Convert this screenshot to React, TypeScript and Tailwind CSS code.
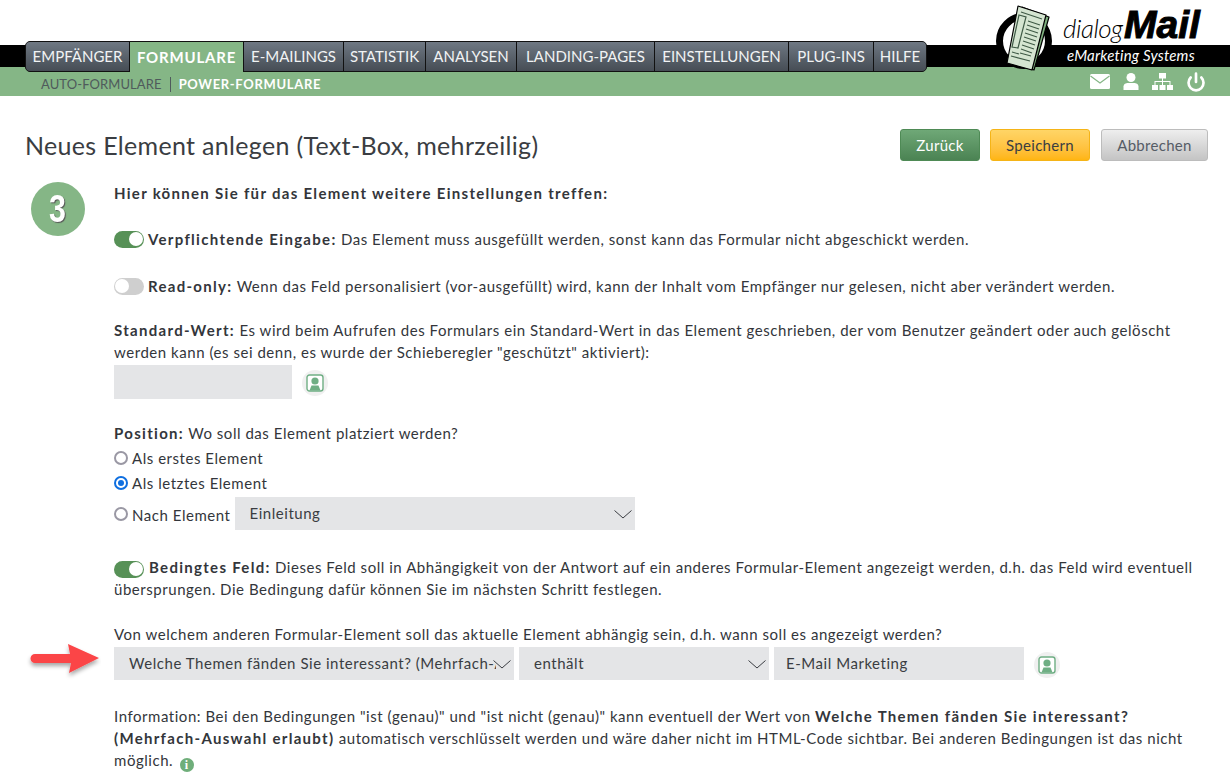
import { Power } from "lucide-react";
import type { ReactNode } from "react";

const tabs = [
  { label: "EMPFÄNGER", width: "w-[103px] rounded-l-[4px]" },
  { label: "FORMULARE", width: "w-[113px]", active: true },
  { label: "E-MAILINGS", width: "w-[99px]" },
  { label: "STATISTIK", width: "w-[81px]" },
  { label: "ANALYSEN", width: "w-[90px]" },
  { label: "LANDING-PAGES", width: "w-[137px]" },
  { label: "EINSTELLUNGEN", width: "w-[133px]" },
  { label: "PLUG-INS", width: "w-[84px]" },
  { label: "HILFE", width: "w-[52px] rounded-r-[4px]" },
];

const B = ({ children }: { children: ReactNode }) => (
  <b className="font-bold tracking-[1.3px]">{children}</b>
);

const Toggle = ({ on }: { on?: boolean }) => (
  <span
    className={`inline-flex w-[30px] h-[17px] rounded-full items-center shrink-0 ${
      on ? "bg-[#579157] justify-end pr-[1px]" : "bg-[#cfcfcf] justify-start pl-[1px]"
    }`}
  >
    <span className="w-[14px] h-[14px] rounded-full bg-white" />
  </span>
);

const Radio = ({ on }: { on?: boolean }) => (
  <span
    className={`w-[14px] h-[14px] rounded-full border-2 bg-white flex items-center justify-center shrink-0 ${
      on ? "border-[#0f6fe0]" : "border-[#9a98a4]"
    }`}
  >
    {on && <span className="w-[6px] h-[6px] rounded-full bg-[#0f6fe0]" />}
  </span>
);

const Select = ({ value, width }: { value: string; width: string }) => (
  <div className={`${width} h-[33px] bg-[#e4e5e7] flex items-center pl-[15px] pr-[18px] relative`}>
    <span className="overflow-hidden whitespace-nowrap flex-1 text-[#3a3d42] -mt-[2px]">{value}</span>
    <svg width="18" height="9" viewBox="0 0 18 9" className="absolute right-[3px] top-[13px]">
      <path d="M0.5 0.5 L9 8 L17.5 0.5" fill="none" stroke="#3a3d42" strokeWidth="1" />
    </svg>
  </div>
);

const PersonIcon = () => (
  <span className="w-[26px] h-[26px] rounded-full bg-[#f0f0f0] flex items-center justify-center shrink-0">
    <svg width="18" height="18" viewBox="0 0 18 18">
      <rect x="1" y="1" width="16" height="16" rx="2.5" fill="#fff" stroke="#6fae84" strokeWidth="1.4" />
      <circle cx="9" cy="7" r="3.6" fill="#6fae84" />
      <path d="M3.5 16.5 L5.5 11.5 H12.5 L14.5 16.5 Z" fill="#6fae84" />
    </svg>
  </span>
);

const MailIcon = () => (
  <svg width="20" height="15" viewBox="0 0 20 15">
    <rect width="20" height="15" rx="1.5" fill="#fff" />
    <path d="M0.5 2 L10 9 L19.5 2" fill="none" stroke="#85b686" strokeWidth="1.2" />
  </svg>
);

const UserIcon = () => (
  <svg width="16" height="17" viewBox="0 0 16 17">
    <circle cx="8" cy="4.5" r="4.5" fill="#fff" />
    <path d="M0.5 17 V13.5 C0.5 11 3 10 5 10 H11 C13 10 15.5 11 15.5 13.5 V17 Z" fill="#fff" />
  </svg>
);

const SitemapIcon = () => (
  <svg width="21" height="17" viewBox="0 0 21 17" fill="#fff">
    <rect x="7" y="0" width="7" height="5.5" />
    <rect x="0" y="12" width="6" height="5" />
    <rect x="7.5" y="12" width="6" height="5" />
    <rect x="15" y="12" width="6" height="5" />
    <path d="M10 5 H11 V8 H18.5 V12 H17.5 V9 H11 V12 H10 V9 H3.5 V12 H2.5 V8 H10 Z" />
  </svg>
);

const Logo = () => (
  <div className="absolute left-[996px] top-[4px] w-[214px] h-[68px]">
    <svg width="62" height="68" viewBox="0 0 62 68" className="absolute left-0 top-0">
      <circle cx="28" cy="37" r="24.5" fill="#fff" stroke="#000" strokeWidth="7" />
      <g stroke="#000" strokeWidth="1.2" strokeLinejoin="round">
        <path d="M26 3 L53 13 L38 66 L20 60 Z" fill="#7fb07f" />
        <path d="M22 2 L50 11 L36 66 L11 59 Z" fill="#d5e5d1" />
      </g>
      <path d="M23 11 L30 13 L22 44 L16 43 Z" fill="none" stroke="#3f5a46" strokeWidth="1.2" />
      <path
        d="M25 8 L46 15 M32 17 L44 21 M31 21 L43 25 M30 25 L42 29 M29 29 L41 33 M28 33 L40 37 M27 37 L39 41 M26 41 L38 45 M25 45 L36 49 M24 49 L35 52 M16 48 L23 50 M15 52 L34 57"
        stroke="#3f5a46"
        strokeWidth="1.1"
      />
    </svg>
    <span className="absolute left-[67px] top-[10px] italic font-light text-[26px] leading-[28px] text-black tracking-[-0.5px]">
      dialog
    </span>
    <span className="absolute left-[128px] top-[1px] italic font-bold text-[39px] leading-[40px] text-black font-['Liberation_Sans'] tracking-[0px] [-webkit-text-stroke:1px_black]">
      Mail
    </span>
    <span className="absolute left-[71px] top-[42px] italic text-[15px] leading-[18px] text-white tracking-[0.2px]">
      eMarketing Systems
    </span>
  </div>
);

const App = () => {
  return (
    <div className="font-['Lato',sans-serif] text-[15px] leading-[22px] text-[#33363b] tracking-[0.54px] w-[1230px] h-[782px] overflow-hidden bg-white">
      <header className="relative h-[96px]">
        <div className="pt-[45px]">
          <div className="h-[22px] bg-black" />
          <div className="h-[29px] bg-[#85b686] flex items-center justify-between pl-[41px] pt-[5px]">
            <div className="flex items-center text-[13px] tracking-[0.1px]">
              <span className="text-[#4f5a5c]">AUTO-FORMULARE</span>
              <span className="w-px h-[15px] bg-[#4f5a5c] mx-[8px]" />
              <span className="text-white font-bold tracking-[0.67px]">POWER-FORMULARE</span>
            </div>
            <div className="flex items-center text-white pr-[24px] -mt-[5px]">
              <MailIcon />
              <span className="ml-[13px]">
                <UserIcon />
              </span>
              <span className="ml-[13px]">
                <SitemapIcon />
              </span>
              <span className="ml-[13px]">
                <Power size={20} strokeWidth={3.2} />
              </span>
            </div>
          </div>
        </div>

        <nav className="absolute left-[25px] top-[41px] flex h-[31px] rounded-[5px] border border-[#111] bg-[#111] gap-[1px] text-[15px] tracking-[0px]">
          {tabs.map((tab) => (
            <div
              key={tab.label}
              className={`${tab.width} flex items-center justify-center pb-[1px] ${
                tab.active
                  ? "bg-[#85b686] text-white font-bold tracking-[0.8px] h-[30px]"
                  : "bg-gradient-to-b from-[#6f7883] to-[#464d55] text-[#f1f3f4]"
              }`}
            >
              {tab.label}
            </div>
          ))}
        </nav>

        <Logo />
      </header>

      <main className="px-[25px]">
        <div className="flex items-center justify-between -mr-[3px] pt-[33px]">
          <h1 className="text-[25px] leading-[32px] text-[#3a3d42] tracking-[0.32px]">
            Neues Element anlegen (Text-Box, mehrzeilig)
          </h1>
          <div className="flex text-[15px] tracking-[0.3px]">
            <button className="w-[80px] h-[32px] rounded-[3px] border border-[#4e8a55] bg-gradient-to-b from-[#6fa877] to-[#4b8353] text-white">
              Zurück
            </button>
            <button className="w-[100px] h-[32px] ml-[10px] rounded-[3px] border border-[#f5b417] bg-gradient-to-b from-[#ffd566] to-[#ffb50f] text-[#3a3d42]">
              Speichern
            </button>
            <button className="w-[107px] h-[32px] ml-[11px] rounded-[3px] border border-[#bcbcbc] bg-gradient-to-b from-[#eeeeee] to-[#c4c4c4] text-[#555c66]">
              Abbrechen
            </button>
          </div>
        </div>

        <div className="flex pt-[21px]">
          <div className="w-[89px] pl-[6px] shrink-0">
            <div className="w-[54px] h-[54px] rounded-full bg-[#85b686] flex items-center justify-center text-white font-['Liberation_Sans'] font-bold text-[38px] [text-shadow:1px_1px_1px_#555] tracking-[0px]">
              <span className="scale-x-[0.8]">3</span>
            </div>
          </div>

          <div className="w-[1090px]">
            <p>
              <B>Hier können Sie für das Element weitere Einstellungen treffen:</B>
            </p>

            <div className="flex items-center gap-[4px] mt-[24px]">
              <Toggle on />
              <p>
                <B>Verpflichtende Eingabe:</B> Das Element muss ausgefüllt werden, sonst kann das Formular nicht abgeschickt werden.
              </p>
            </div>

            <div className="flex items-center gap-[4px] mt-[25px]">
              <Toggle />
              <p>
                <B>Read-only:</B> Wenn das Feld personalisiert (vor-ausgefüllt) wird, kann der Inhalt vom Empfänger nur gelesen, nicht aber verändert werden.
              </p>
            </div>

            <p className="mt-[22px]">
              <B>Standard-Wert:</B> Es wird beim Aufrufen des Formulars ein Standard-Wert in das Element geschrieben, der vom Benutzer geändert oder auch gelöscht werden kann (es sei denn, es wurde der Schieberegler "geschützt" aktiviert):
            </p>
            <div className="flex items-center mt-[2px]">
              <div className="w-[178px] h-[34px] bg-[#e4e5e7]" />
              <span className="ml-[10px] mt-[2px]">
                <PersonIcon />
              </span>
            </div>

            <p className="mt-[23px]">
              <B>Position:</B> Wo soll das Element platziert werden?
            </p>
            <div className="flex items-center gap-[4px] mt-[1px] h-[25px]">
              <Radio />
              <span>Als erstes Element</span>
            </div>
            <div className="flex items-center gap-[4px] h-[25px]">
              <Radio on />
              <span>Als letztes Element</span>
            </div>
            <div className="flex items-center gap-[4px] mt-[2px]">
              <Radio />
              <span className="mt-[3px]">Nach Element</span>
              <Select value="Einleitung" width="w-[400px]" />
            </div>

            <div className="mt-[26px] relative">
              <p className="indent-[35px]">
                <B>Bedingtes Feld:</B> Dieses Feld soll in Abhängigkeit von der Antwort auf ein anderes Formular-Element angezeigt werden, d.h. das Feld wird eventuell übersprungen. Die Bedingung dafür können Sie im nächsten Schritt festlegen.
              </p>
              <span className="absolute left-0 top-[3px]">
                <Toggle on />
              </span>
            </div>

            <p className="mt-[23px]">
              Von welchem anderen Formular-Element soll das aktuelle Element abhängig sein, d.h. wann soll es angezeigt werden?
            </p>
            <div className="relative flex items-center gap-[5px] mt-[2px]">
              <svg width="76" height="46" viewBox="0 0 76 46" className="absolute -left-[89px] -top-[6px]">
                <defs>
                  <filter id="arrowShadow" x="-20%" y="-30%" width="140%" height="170%">
                    <feDropShadow dx="0" dy="3" stdDeviation="2.2" floodColor="#000" floodOpacity="0.35" />
                  </filter>
                </defs>
                <path
                  d="M10 13 H45 L43 3 L74 17 L44 32 L46 22 H10 A4.5 4.5 0 0 1 10 13 Z"
                  fill="#fb4447"
                  filter="url(#arrowShadow)"
                />
              </svg>
              <Select value="Welche Themen fänden Sie interessant? (Mehrfach-Auswahl erlaubt)" width="w-[400px]" />
              <Select value="enthält" width="w-[250px]" />
              <div className="w-[250px] h-[33px] bg-[#e4e5e7] flex items-center pl-[12px] text-[#3a3d42]">
                <span className="-mt-[2px]">E-Mail Marketing</span>
              </div>
              <span className="ml-[5px] mt-[2px]">
                <PersonIcon />
              </span>
            </div>

            <p className="mt-[25px]">
              Information: Bei den Bedingungen "ist (genau)" und "ist nicht (genau)" kann eventuell der Wert von{" "}
              <B>Welche Themen fänden Sie interessant? (Mehrfach-Auswahl erlaubt)</B> automatisch verschlüsselt werden und wäre daher nicht im HTML-Code sichtbar. Bei anderen Bedingungen ist das nicht möglich.{" "}
              <span className="inline-flex w-[14px] h-[14px] ml-[2px] rounded-full bg-[#6fae7a] text-white items-center justify-center align-[-3px] font-bold text-[12px] font-['Liberation_Serif'] tracking-[0px]">
                i
              </span>
            </p>
          </div>
        </div>
      </main>
    </div>
  );
};

export default App;
